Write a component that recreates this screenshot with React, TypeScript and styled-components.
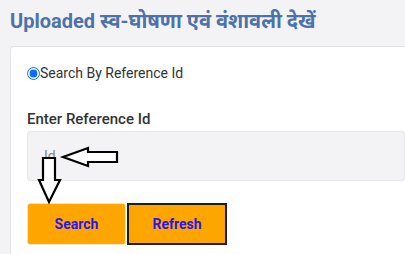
import styled, { createGlobalStyle } from 'styled-components';

const GlobalStyle = createGlobalStyle`
    html, body {
        margin: 0;
        padding: 0;
        background: #f3f3f6;
        overflow: hidden;
    }
    body {
        font-family: Roboto, "Noto Sans", "Liberation Sans", sans-serif;
    }
`

const Page = styled.div`
    width: 405px;
    height: 254px;
    padding: 0 0 0 10px;
    box-sizing: border-box;
    overflow: hidden;
`

const Title = styled.h2`
    margin: 0;
    padding-top: 7px;
    height: 46px;
    box-sizing: border-box;
    font-size: 20px;
    font-weight: 700;
    color: #4d72a8;
    white-space: nowrap;
`

const Card = styled.div`
    background: #fff;
    border: 1px solid #e2e2e6;
    border-right: none;
    border-bottom: none;
    border-radius: 4px 0 0 0;
    width: 395px;
    height: 208px;
    padding: 19px 0 0 16px;
    box-sizing: border-box;
`

const RadioRow = styled.label`
    display: flex;
    align-items: center;
    font-size: 14px;
    color: #333;
    height: 14px;
`

const Radio = styled.input`
    margin: 0;
    width: 13px;
    height: 13px;
    accent-color: #0a6cff;
`

const FieldLabel = styled.div`
    margin-top: 30px;
    font-size: 15px;
    font-weight: 500;
    color: #333;
    line-height: 18px;
`

const InputWrap = styled.div`
    position: relative;
    margin-top: 3px;
    width: 378px;
`

const Input = styled.input`
    display: block;
    width: 100%;
    height: 50px;
    box-sizing: border-box;
    background: #f3f3f5;
    border: 1px solid #e6e6ea;
    border-radius: 3px;
    padding: 0 16px;
    font-family: inherit;
    font-size: 14px;
    color: #333;
    outline: none;

    &::placeholder {
        color: #8c8680;
    }
`

const Arrows = styled.svg`
    position: absolute;
    left: 0;
    top: 0;
    overflow: visible;
    pointer-events: none;
`

const Buttons = styled.div`
    display: flex;
    gap: 1px;
    margin-top: 22px;
`

const Button = styled.button<{ $outlined?: boolean }>`
    width: ${(p) => (p.$outlined ? '100px' : '99px')};
    height: 42px;
    background: #ffa500;
    border: ${(p) => (p.$outlined ? '2px solid #1e1e1e' : '1px solid #f2e6cc')};
    border-radius: ${(p) => (p.$outlined ? '0' : '3px')};
    font-family: inherit;
    font-size: 14px;
    font-weight: 700;
    color: #2a14f0;
    cursor: pointer;
`

const App = () => {
    return (
        <>
            <GlobalStyle />
            <Page>
                <Title>Uploaded स्व-घोषणा एवं वंशावली देखें</Title>
                <Card>
                    <RadioRow>
                        <Radio type="radio" name="search" defaultChecked />
                        Search By Reference Id
                    </RadioRow>
                    <FieldLabel>Enter Reference Id</FieldLabel>
                    <InputWrap>
                        <Input placeholder="Id" />
                        {/* annotation arrows drawn over the input */}
                        <Arrows width="378" height="80">
                            <polygon
                                points="36,26 61,17 61,21 90,21 90,31 61,31 61,35"
                                fill="#fff"
                                stroke="#000"
                                strokeWidth="2.2"
                                strokeLinejoin="miter"
                            />
                            <polygon
                                points="16,27 28,27 28,49 33,49 22,71 12,49 16,49"
                                fill="#fff"
                                stroke="#000"
                                strokeWidth="2.2"
                                strokeLinejoin="miter"
                            />
                        </Arrows>
                    </InputWrap>
                    <Buttons>
                        <Button>Search</Button>
                        <Button $outlined>Refresh</Button>
                    </Buttons>
                </Card>
            </Page>
        </>
    );
}

export default App;
